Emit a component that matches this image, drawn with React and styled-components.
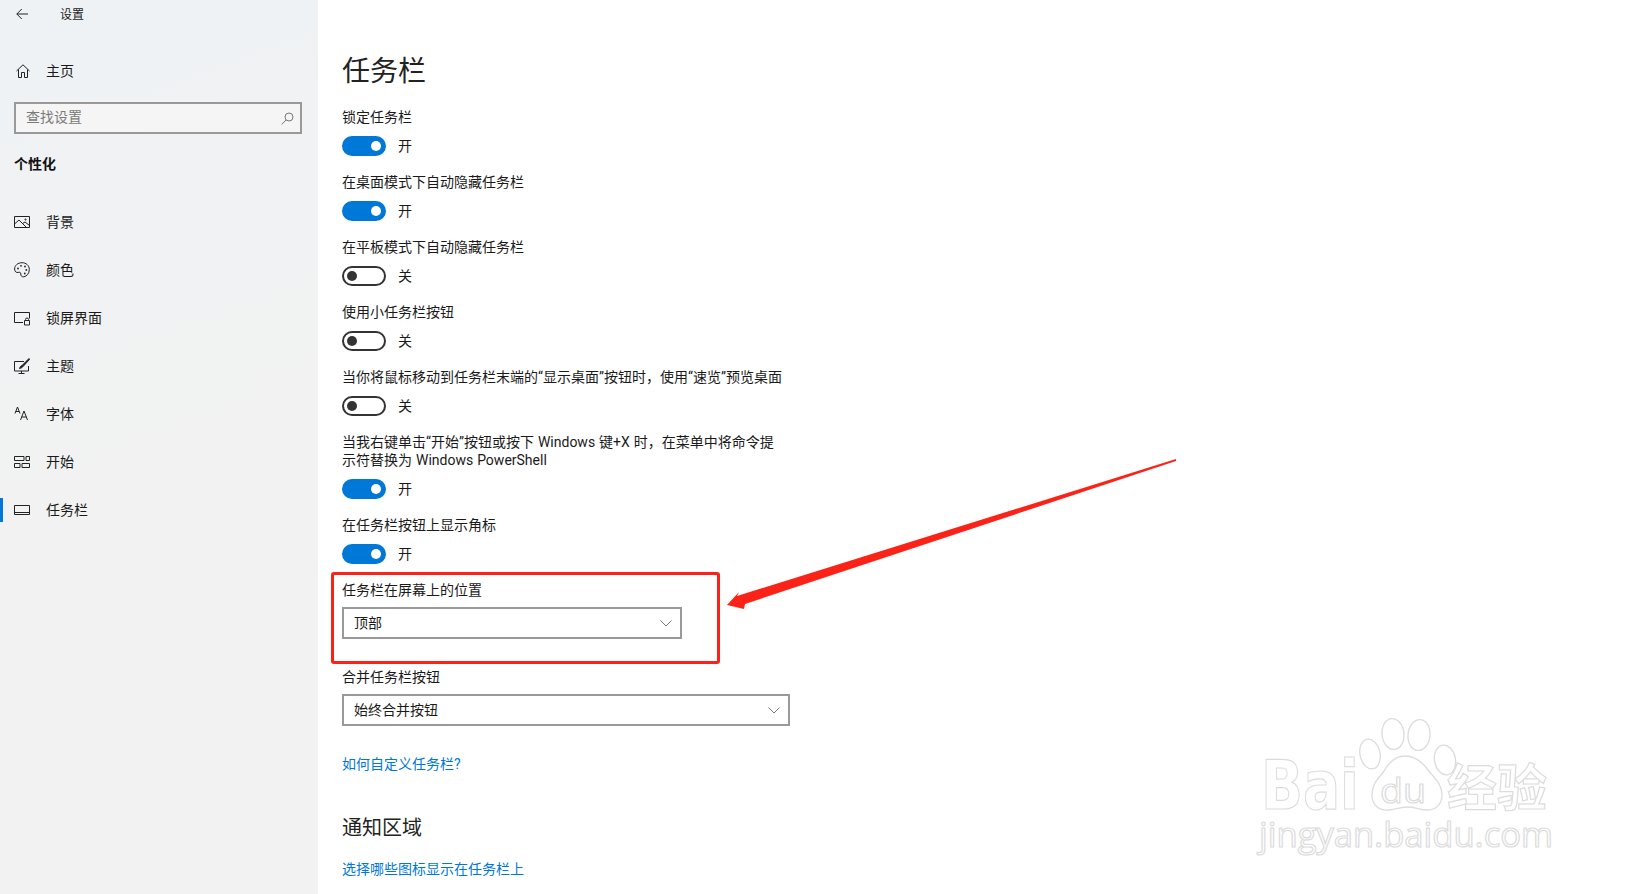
import React from 'react'
import styled, { createGlobalStyle } from 'styled-components'

const GlobalStyle = createGlobalStyle`
	html, body {
		margin: 0;
		padding: 0;
		background: #fff;
	}
	body {
		font-family: Roboto, 'Noto Sans CJK SC', sans-serif;
		color: #1a1a1a;
	}
	* {
		box-sizing: border-box;
	}
`

const Page = styled.div`
	position: relative;
	display: flex;
	width: 100%;
	height: 100vh;
	overflow: hidden;
	background: #fff;
`

const Sidebar = styled.aside`
	flex: 0 0 318px;
	display: flex;
	flex-direction: column;
	background: linear-gradient(160deg, #eef2f5 0%, #f1f2f3 30%, #f2f2f2 60%);
`

const BackRow = styled.div`
	display: flex;
	align-items: center;
	height: 28px;
	padding-left: 16px;
	font-size: 12px;
	svg {
		margin-right: 32px;
	}
`

const HomeRow = styled.div`
	display: flex;
	align-items: center;
	height: 28px;
	margin-top: 29px;
	padding-left: 16px;
	font-size: 14px;
	svg {
		margin-right: 16px;
	}
`

// pulls the glyphs up a pixel inside a centred row
const RowText = styled.span`
	margin-bottom: 2px;
`

const SearchText = styled.span`
	margin-bottom: 4px;
`

const SearchBox = styled.div`
	display: flex;
	align-items: center;
	justify-content: space-between;
	width: 288px;
	height: 32px;
	margin: 17px 0 0 14px;
	padding: 0 6px 0 10px;
	border: 2px solid #999;
	background: #f5f5f5;
	color: #7a7a7a;
	font-size: 14px;
`

const GroupTitle = styled.div`
	margin: 20px 0 24px 14px;
	height: 20px;
	line-height: 20px;
	font-size: 14px;
	font-weight: 700;
	color: #111;
`

const NavItem = styled.div`
	position: relative;
	display: flex;
	align-items: center;
	height: 48px;
	padding-left: 14px;
	font-size: 14px;
	svg {
		flex: none;
		margin-right: 16px;
	}
	${(p) =>
		p.$active &&
		`&::before {
			content: '';
			position: absolute;
			left: 0;
			top: 12px;
			width: 3px;
			height: 24px;
			background: #0078d7;
		}`}
`

const Main = styled.main`
	flex: 1;
	padding: 52px 0 0 24px;
	font-size: 14px;
`

const Title = styled.h1`
	margin: 0 0 16px;
	font-size: 28px;
	line-height: 40px;
	font-weight: 400;
	color: #222;
`

const Setting = styled.div`
	width: 448px;
	margin-bottom: ${(p) => p.$gap || 17}px;
`

const Label = styled.div`
	line-height: 18px;
	word-spacing: 0.5px;
`

const ToggleRow = styled.div`
	display: flex;
	align-items: center;
	gap: 12px;
	height: 20px;
	margin-top: 10px;
`

const Track = styled.span`
	position: relative;
	display: block;
	width: 44px;
	height: 20px;
	border-radius: 10px;
	border: 2px solid ${(p) => (p.$on ? '#0078d7' : '#333')};
	background: ${(p) => (p.$on ? '#0078d7' : 'transparent')};

	&::after {
		content: '';
		position: absolute;
		top: 3px;
		left: ${(p) => (p.$on ? '27px' : '3px')};
		width: 10px;
		height: 10px;
		border-radius: 50%;
		background: ${(p) => (p.$on ? '#fff' : '#333')};
	}
`

const Select = styled.div`
	display: flex;
	align-items: center;
	justify-content: space-between;
	width: ${(p) => p.$width}px;
	height: 32px;
	margin-top: 8px;
	padding: 0 8px 0 10px;
	border: 2px solid #999;
	background: #fff;
`

const LinkText = styled.a`
	display: block;
	line-height: 18px;
	color: #0078d7;
	text-decoration: none;
`

const Section = styled.h2`
	margin: 41px 0 18px;
	font-size: 20px;
	line-height: 28px;
	font-weight: 400;
	color: #222;
`

const RedFrame = styled.div`
	position: absolute;
	left: 331px;
	top: 572px;
	width: 389px;
	height: 92px;
	border: 3px solid #fb2317;
	border-radius: 3px;
	pointer-events: none;
`

const Overlay = styled.svg`
	position: absolute;
	left: 0;
	top: 0;
	pointer-events: none;
`

const Icon = ({ children, w = 16, h = 16 }) => (
	<svg width={w} height={h} viewBox={`0 0 ${w} ${h}`} fill="none" stroke="#222" strokeWidth="1">
		{children}
	</svg>
)

const Chevron = () => (
	<svg width="12" height="7" viewBox="0 0 12 7" fill="none" stroke="#777" strokeWidth="1">
		<path d="M.5.5L6 6 11.500.5" />
	</svg>
)

const Toggle = ({ on }) => (
	<ToggleRow>
		<Track $on={on} />
		<RowText>{on ? '开' : '关'}</RowText>
	</ToggleRow>
)

const navItems = [
	{
		text: '背景',
		icon: (
			<Icon>
				<path d="M.5 2.500h15v11H.5z" />
				<path d="M.5 10l4.500-4 7.500 7.500M8.500 9.500L11 8l4.500 3.500" />
				<circle cx="11.500" cy="5.500" r=".6" />
			</Icon>
		),
	},
	{
		text: '颜色',
		icon: (
			<Icon>
				<path d="M8 .7C3.900.7.600 3.400.600 7c0 2.700 1.900 3.900 3.500 3.400 1.700-.5 2.900.1 2.700 1.600-.2 1.700 1 3.100 3 2.800 3-.5 5.500-3.300 5.500-7.300C15.300 3.400 12 .7 8 .7z" />
				<circle cx="4" cy="6.500" r=".9" fill="#222" stroke="none" />
				<circle cx="7" cy="3.800" r=".9" fill="#222" stroke="none" />
				<circle cx="11" cy="4.500" r=".9" fill="#222" stroke="none" />
				<circle cx="12.300" cy="8" r=".9" fill="#222" stroke="none" />
				<circle cx="10.800" cy="11.500" r=".9" fill="#222" stroke="none" />
			</Icon>
		),
	},
	{
		text: '锁屏界面',
		icon: (
			<Icon>
				<path d="M9 12.500H.5v-10h15v6" />
				<path d="M10.500 10.500h5v4.500h-5zM11.500 10.500V9.500a1.500 1.500 0 0 1 3 0v1" />
			</Icon>
		),
	},
	{
		text: '主题',
		icon: (
			<Icon>
				<path d="M10 3.500H.5v9.500h14V8" />
				<path d="M7.500 13v2.500M4.500 15.500h6" />
				<path d="M15 .5L8 7.500c-1.500.5-2 1.500-2.500 3 1.500-.3 2.700-.8 3.500-2l6.500-7z" fill="#222" />
			</Icon>
		),
	},
	{
		text: '字体',
		icon: (
			<Icon>
				<path d="M1 7.500L3.500 1 6 7.500M1.800 5.500h3.400" />
				<path d="M6.500 14l3.500-9 3.500 9M7.700 11h4.600" />
			</Icon>
		),
	},
	{
		text: '开始',
		icon: (
			<Icon>
				<path d="M.5 2.500h9.500v4H.5zM12 2.500h3.500v4H12zM.5 9.500h5.500v4H.5zM8 9.500h7.500v4H8z" />
			</Icon>
		),
	},
	{
		text: '任务栏',
		active: true,
		icon: (
			<Icon>
				<path d="M.5 3.500h15v9H.5z" />
				<path d="M.5 10.500h15" />
			</Icon>
		),
	},
]

const settings = [
	{ id: 'lock', label: '锁定任务栏', on: true },
	{ id: 'desktop', label: '在桌面模式下自动隐藏任务栏', on: true },
	{ id: 'tablet', label: '在平板模式下自动隐藏任务栏', on: false },
	{ id: 'small', label: '使用小任务栏按钮', on: false },
	{ id: 'peek', label: '当你将鼠标移动到任务栏末端的“显示桌面”按钮时，使用“速览”预览桌面', on: false },
	{
		id: 'powershell',
		label: (
			<>
				当我右键单击“开始”按钮或按下 Windows 键+X 时，在菜单中将命令提
				<br />
				示符替换为 Windows PowerShell
			</>
		),
		on: true,
	},
	{ id: 'badge', label: '在任务栏按钮上显示角标', on: true },
]

const wmText = {
	fill: '#fff',
	stroke: '#dcdcdc',
	strokeWidth: 1.2,
	fontFamily: "'Open Sans', 'Noto Sans CJK SC', sans-serif",
}

const wmLogoText = { ...wmText, fontFamily: "'DejaVu Sans', sans-serif" }

// red arrow and the baidu watermark that sit on top of the screenshot
const Annotations = () => (
	<Overlay width="1643" height="894" viewBox="0 0 1643 894">
		<g fill="none" stroke="#dcdcdc" strokeWidth="1.3">
			<ellipse cx="1370" cy="754" rx="10" ry="15" transform="rotate(-12 1370 754)" />
			<ellipse cx="1393" cy="734" rx="11" ry="15.500" transform="rotate(-6 1393 734)" />
			<ellipse cx="1419" cy="735" rx="11" ry="15.500" transform="rotate(6 1419 735)" />
			<ellipse cx="1445" cy="760" rx="10.500" ry="15" transform="rotate(-10 1445 760)" />
			<path d="M1405 756c-10 0-17 8-21 15-5 7-12 12-12 24 0 11 8 16 17 15 8-1 13-3 19-3 7 0 11 3 19 3 9 0 15-6 15-15 0-12-8-17-14-25-5-7-13-14-23-14z" />
		</g>
		<text x="1261" y="809" fontSize="68" fontWeight="700" textLength="98" lengthAdjust="spacingAndGlyphs" style={wmLogoText}>Bai</text>
		<text x="1380" y="803" fontSize="34" textLength="46" lengthAdjust="spacingAndGlyphs" style={wmText}>du</text>
		<text x="1447" y="806" fontSize="50" fontWeight="700" style={wmText}>经验</text>
		<text x="1259" y="847" fontSize="34" textLength="294" lengthAdjust="spacingAndGlyphs" style={wmText}>jingyan.baidu.com</text>
		<polygon
			points="1176,459 1176,461 745,604 744,609 727,605 739,592 737,596"
			fill="#fb2317"
		/>
	</Overlay>
)

export default function App() {
	return (
		<>
			<GlobalStyle />
			<Page>
				<Sidebar>
					<BackRow>
						<svg width="12" height="12" viewBox="0 0 12 12" fill="none" stroke="#222" strokeWidth="1">
							<path d="M12 6H.8M5.800 1L.8 6l5 5" />
						</svg>
						<RowText>设置</RowText>
					</BackRow>
					<HomeRow>
						<svg width="14" height="14" viewBox="0 0 14 14" fill="none" stroke="#222" strokeWidth="1">
							<path d="M.5 7L7 .8 13.500 7M2.500 5.500v8h3V8.500h3v5h3v-8" />
						</svg>
						<RowText>主页</RowText>
					</HomeRow>
					<SearchBox>
						<SearchText>查找设置</SearchText>
						<svg width="13" height="13" viewBox="0 0 13 13" fill="none" stroke="#777" strokeWidth="1">
							<circle cx="8" cy="5" r="4" />
							<path d="M5 8L.7 12.500" />
						</svg>
					</SearchBox>
					<GroupTitle>个性化</GroupTitle>
					{navItems.map((item) => (
						<NavItem key={item.text} $active={item.active}>
							{item.icon}
							<RowText>{item.text}</RowText>
						</NavItem>
					))}
				</Sidebar>
				<Main>
					<Title>任务栏</Title>
					{settings.map((s) => (
						<Setting key={s.id}>
							<Label>{s.label}</Label>
							<Toggle on={s.on} />
						</Setting>
					))}
					<Setting $gap={29}>
						<Label>任务栏在屏幕上的位置</Label>
						<Select $width={340}>
							<RowText>顶部</RowText>
							<Chevron />
						</Select>
					</Setting>
					<Setting $gap={29}>
						<Label>合并任务栏按钮</Label>
						<Select $width={448}>
							<RowText>始终合并按钮</RowText>
							<Chevron />
						</Select>
					</Setting>
					<LinkText>如何自定义任务栏?</LinkText>
					<Section>通知区域</Section>
					<LinkText>选择哪些图标显示在任务栏上</LinkText>
				</Main>
				<RedFrame />
				<Annotations />
			</Page>
		</>
	)
}
